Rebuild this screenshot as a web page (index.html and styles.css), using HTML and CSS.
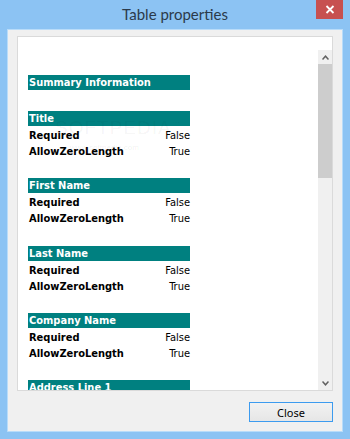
FILE: index.html
```html
<!DOCTYPE html>
<html>
<head>
<meta charset="utf-8">
<link rel="stylesheet" href="styles.css">
</head>
<body>
<div class="window">
  <div class="titlebar">
    <span class="title">Table properties</span>
    <div class="close-x" aria-label="Close">
      <svg width="10" height="9" viewBox="0 0 10 9"><path d="M1.5 1 L8.5 8 M8.5 1 L1.5 8" stroke="#fff" stroke-width="1.8" fill="none"/></svg>
    </div>
  </div>
  <div class="client">
    <div class="panel">
      <div class="panel-top"></div>
      <div class="scroller">
        <div class="content">
          <div class="watermark">SOFTPEDIA<sup>™</sup></div>
          <div class="watermark-url">www.softpedia.com</div>
          <div class="summary"><div class="bar">Summary Information</div></div>
          <div class="section">
            <div class="bar">Title</div>
            <div class="row"><span class="key">Required</span><span class="val">False</span></div>
            <div class="row"><span class="key">AllowZeroLength</span><span class="val">True</span></div>
          </div>
          <div class="section">
            <div class="bar">First Name</div>
            <div class="row"><span class="key">Required</span><span class="val">False</span></div>
            <div class="row"><span class="key">AllowZeroLength</span><span class="val">True</span></div>
          </div>
          <div class="section">
            <div class="bar">Last Name</div>
            <div class="row"><span class="key">Required</span><span class="val">False</span></div>
            <div class="row"><span class="key">AllowZeroLength</span><span class="val">True</span></div>
          </div>
          <div class="section">
            <div class="bar">Company Name</div>
            <div class="row"><span class="key">Required</span><span class="val">False</span></div>
            <div class="row"><span class="key">AllowZeroLength</span><span class="val">True</span></div>
          </div>
          <div class="section">
            <div class="bar">Address Line 1</div>
          </div>
        </div>
        <div class="scrollbar">
          <div class="sb-btn">
            <svg width="7" height="5" viewBox="0 0 7 5"><path d="M0.5 4.5 L3.5 1.2 L6.5 4.5" stroke="#606060" stroke-width="1.5" fill="none"/></svg>
          </div>
          <div class="sb-thumb"></div>
          <div class="sb-track"></div>
          <div class="sb-btn">
            <svg width="7" height="5" viewBox="0 0 7 5"><path d="M0.5 0.5 L3.5 3.8 L6.5 0.5" stroke="#606060" stroke-width="1.5" fill="none"/></svg>
          </div>
        </div>
      </div>
    </div>
    <div class="footer">
      <button class="btn">Close</button>
    </div>
  </div>
</div>
</body>
</html>
```

FILE: styles.css
```css
html, body {
  margin: 0;
  padding: 0;
}
body {
  width: 350px;
  height: 439px;
  overflow: hidden;
  background: #8cc3f3;
}
.window {
  width: 350px;
  height: 439px;
  box-sizing: border-box;
  display: flex;
  flex-direction: column;
  background: #8cc3f3;
  position: relative;
}
.titlebar {
  height: 29px;
  display: flex;
  align-items: center;
  justify-content: center;
  position: relative;
}
.title {
  font-family: "Lato", "Noto Sans", sans-serif;
  font-size: 15px;
  color: #2b3a4a;
  margin-top: -1px;
}
.close-x {
  position: absolute;
  left: 316px;
  top: 0;
  width: 27px;
  height: 19px;
  background: #c75050;
  display: flex;
  align-items: center;
  justify-content: center;
}
.client {
  margin: 0 7px 7px 7px;
  height: 403px;
  box-sizing: border-box;
  border: 1px solid #b9dcf9;
  background: #f0f0f0;
  padding: 6px 9px 0 9px;
  display: flex;
  flex-direction: column;
}
.panel {
  height: 355px;
  box-sizing: border-box;
  border: 1px solid #dadada;
  background: #fff;
  display: flex;
  flex-direction: column;
}
.panel-top {
  height: 13px;
}
.scroller {
  height: 340px;
  display: flex;
  overflow: hidden;
}
.content {
  flex: 1;
  padding: 25px 0 0 10px;
  font-family: "DejaVu Sans Condensed", "DejaVu Sans", sans-serif;
  font-stretch: condensed;
  font-size: 11px;
  color: #000;
  position: relative;
}
.bar {
  width: 162px;
  height: 15px;
  line-height: 15px;
  background: #008080;
  color: #fff;
  font-weight: bold;
  padding-left: 1px;
  box-sizing: border-box;
}
.summary {
  margin-bottom: 21px;
}
.section {
  width: 162px;
  margin-bottom: 20.3px;
}
.row {
  height: 16px;
  line-height: 19px;
  display: flex;
  justify-content: space-between;
  padding-left: 1px;
}
.key {
  font-weight: bold;
}
.val {
  font-weight: normal;
}
.watermark {
  position: absolute;
  left: 37px;
  top: 67px;
  font-family: "Liberation Sans", sans-serif;
  font-size: 19px;
  letter-spacing: 1px;
  color: rgba(0,0,0,0.05);
  pointer-events: none;
}
.watermark sup {
  font-size: 8px;
}
.watermark-url {
  position: absolute;
  left: 52px;
  top: 93px;
  font-family: "Liberation Sans", sans-serif;
  font-size: 8px;
  color: rgba(0,0,0,0.07);
}
.scrollbar {
  width: 14px;
  display: flex;
  flex-direction: column;
  background: #f0f0f0;
}
.sb-btn {
  height: 14px;
  display: flex;
  align-items: center;
  justify-content: center;
  background: #f0f0f0;
}
.sb-thumb {
  height: 114px;
  background: #cdcdcd;
}
.sb-track {
  flex: 1;
}
.footer {
  display: flex;
  justify-content: flex-end;
  padding-top: 11px;
}
.btn {
  width: 84px;
  height: 20px;
  box-sizing: border-box;
  border: 1px solid #3c9bef;
  background: linear-gradient(#f2f2f2, #e6e6e6);
  font-family: "Noto Sans", "Open Sans", sans-serif;
  font-size: 11px;
  color: #000;
  padding: 0;
  line-height: 17px;
}
```
